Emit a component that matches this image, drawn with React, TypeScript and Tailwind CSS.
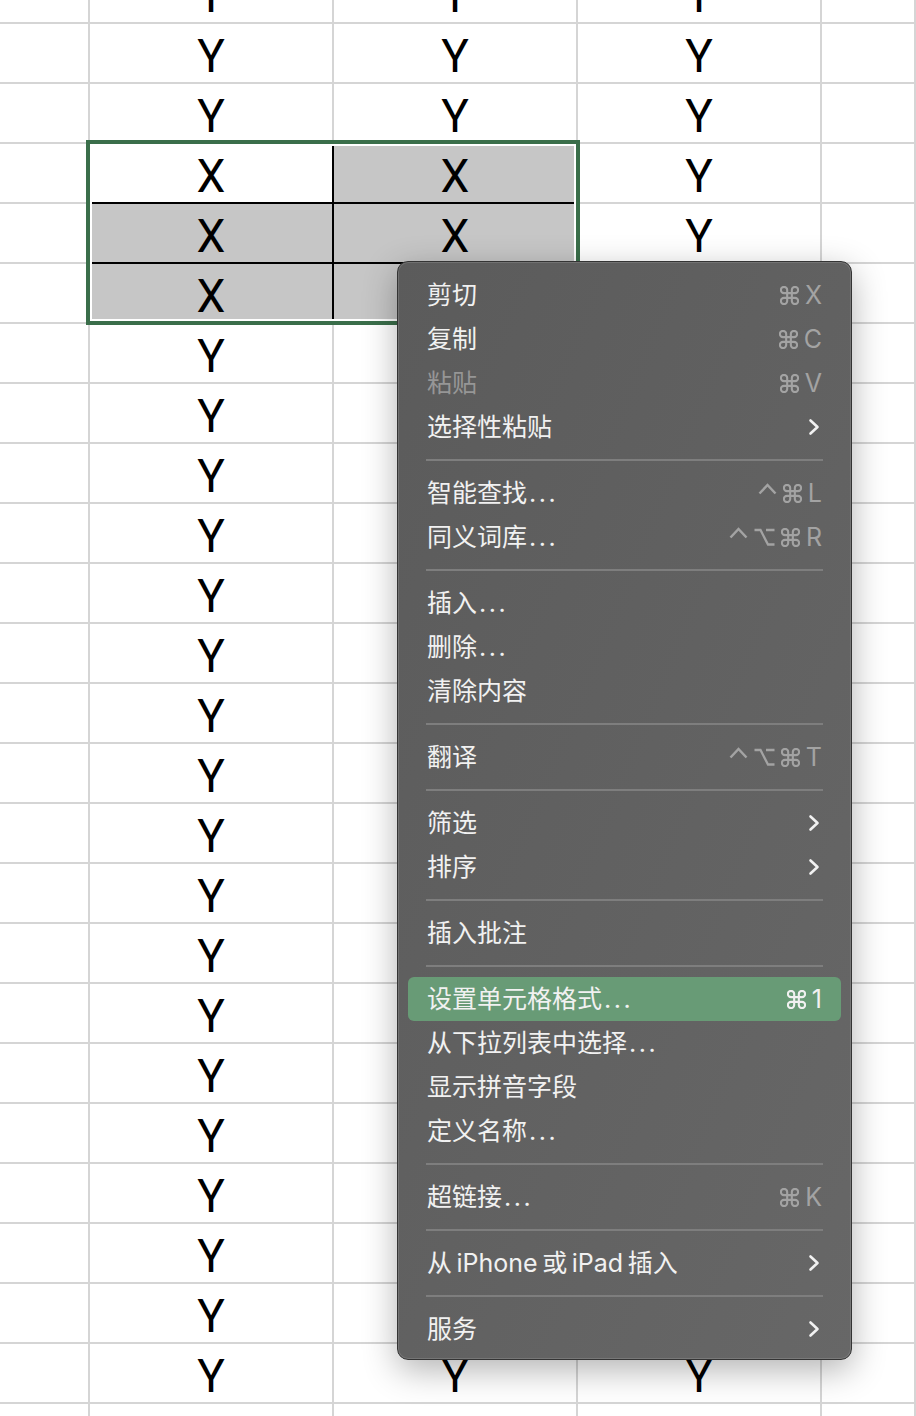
import React from "react";

type MenuItem = {
  label: string;
  keys?: string[];
  sub?: boolean;
  disabled?: boolean;
  active?: boolean;
};

const GROUPS: MenuItem[][] = [
  [
    { label: "剪切", keys: ["cmd", "X"] },
    { label: "复制", keys: ["cmd", "C"] },
    { label: "粘贴", keys: ["cmd", "V"], disabled: true },
    { label: "选择性粘贴", sub: true },
  ],
  [
    { label: "智能查找...", keys: ["ctrl", "cmd", "L"] },
    { label: "同义词库...", keys: ["ctrl", "opt", "cmd", "R"] },
  ],
  [{ label: "插入..." }, { label: "删除..." }, { label: "清除内容" }],
  [{ label: "翻译", keys: ["ctrl", "opt", "cmd", "T"] }],
  [
    { label: "筛选", sub: true },
    { label: "排序", sub: true },
  ],
  [{ label: "插入批注" }],
  [
    { label: "设置单元格格式...", keys: ["cmd", "1"], active: true },
    { label: "从下拉列表中选择..." },
    { label: "显示拼音字段" },
    { label: "定义名称..." },
  ],
  [{ label: "超链接...", keys: ["cmd", "K"] }],
  [{ label: "从\u2009iPhone\u2009或\u2009iPad\u2009插入", sub: true }],
  [{ label: "服务", sub: true }],
];

const ROW_COUNT = 25;
const SEL_ROWS = [3, 4, 5];

function Key({ k }: { k: string }) {
  if (k === "ctrl") {
    return (
      <svg width="19" height="18" viewBox="0 0 19 18" className="self-start mt-[1px]">
        <path d="M1.5 11.5 L9.5 3 L17.5 11.5" fill="none" stroke="currentColor" strokeWidth="2.5" />
      </svg>
    );
  }
  if (k === "opt") {
    return (
      <svg width="21" height="18" viewBox="0 0 21 18">
        <path d="M0.5 2 H6.5 L14 16.5 H20.5 M12 2 H20.5" fill="none" stroke="currentColor" strokeWidth="2.3" />
      </svg>
    );
  }
  if (k === "cmd") {
    // place-of-interest sign
    return (
      <svg width="19" height="19" viewBox="0 0 18 18" fill="none" stroke="currentColor" strokeWidth="2">
        <path d="M6.8 3.8 V14.2 M11.2 3.8 V14.2 M3.8 6.8 H14.2 M3.8 11.2 H14.2" />
        <path d="M6.8 3.8 A3 3 0 1 0 3.8 6.8" />
        <path d="M11.2 3.8 A3 3 0 1 1 14.2 6.8" />
        <path d="M6.8 14.2 A3 3 0 1 1 3.8 11.2" />
        <path d="M11.2 14.2 A3 3 0 1 0 14.2 11.2" />
      </svg>
    );
  }
  return <span className="text-[25px] leading-none">{k}</span>;
}

function Chevron() {
  return (
    <svg width="12" height="18" viewBox="0 0 12 18" className="mr-[2px]">
      <path d="M2.5 2.5 L9.5 9 L2.5 15.5" fill="none" stroke="currentColor" strokeWidth="2.6" strokeLinecap="round" strokeLinejoin="round" />
    </svg>
  );
}

function Label({ text }: { text: string }) {
  if (!text.endsWith("...")) return <>{text}</>;
  return (
    <>
      {text.slice(0, -3)}
      <span className="ml-[2px] tracking-[2.5px]">...</span>
    </>
  );
}

function ContextMenu() {
  return (
    <div className="absolute left-[397px] top-[261px] w-[455px] rounded-[11px] border border-[#343434] bg-linear-to-br from-[#5b5b5b] to-[#676767] pt-[11px] pb-[8px] shadow-[inset_0_0_0_1px_rgba(255,255,255,0.13),0_10px_34px_rgba(0,0,0,0.3)] font-['Inter','Noto_Sans_CJK_SC',sans-serif]">
      {GROUPS.map((group, gi) => (
        <div key={gi}>
          {gi > 0 && (
            <div className="flex h-[22px] items-center px-[28px]">
              <div className="h-[2px] w-full bg-[#7e7e7e]" />
            </div>
          )}
          {group.map((item) => (
            <div
              key={item.label}
              className={`mx-[10px] flex h-[44px] items-center justify-between rounded-[6px] px-[19px] ${
                item.active ? "bg-[#689b76]" : ""
              }`}
            >
              <span
                className={`text-[25px] leading-none ${
                  item.disabled ? "text-[#969696]" : "text-[#f1f1f1]"
                }`}
              >
                <Label text={item.label} />
              </span>
              {item.keys && (
                <span
                  className={`flex items-center gap-[6px] ${
                    item.active ? "text-[#f1f1f1]" : "text-[#a3a3a3]"
                  }`}
                >
                  {item.keys.map((k, i) => (
                    <Key key={i} k={k} />
                  ))}
                </span>
              )}
              {item.sub && (
                <span className="text-[#f1f1f1]">
                  <Chevron />
                </span>
              )}
            </div>
          ))}
        </div>
      ))}
    </div>
  );
}

function Cell({
  width,
  text,
  selected,
  active,
}: {
  width: string;
  text?: string;
  selected?: boolean;
  active?: boolean;
}) {
  const border = selected ? "border-black" : "border-[#d5d5d5]";
  const bg = selected && !active ? "bg-[#c6c6c6]" : "bg-white";
  return (
    <div
      className={`${width} flex h-full shrink-0 items-center justify-center border-r-2 border-b-2 ${border} ${bg} pt-[6px] text-[46px] leading-none text-black`}
    >
      {text}
    </div>
  );
}

export default function App() {
  const rows = Array.from({ length: ROW_COUNT }, (_, i) => i);
  return (
    <div className="relative h-[1416px] w-[916px] overflow-hidden bg-white font-['Roboto',sans-serif]">
      <div className="-mt-[36px]">
        {rows.map((r) => {
          const sel = SEL_ROWS.includes(r);
          return (
            <div key={r} className="flex h-[60px]">
              <Cell width="w-[90px]" />
              <Cell width="w-[244px]" text={sel ? "X" : "Y"} selected={sel} active={r === 3} />
              <Cell width="w-[244px]" text={sel ? "X" : "Y"} selected={sel} />
              <Cell width="w-[244px]" text="Y" />
              <Cell width="flex-1" />
            </div>
          );
        })}
      </div>

      {/* selection outline */}
      <div className="absolute left-[86px] top-[140px] h-[185px] w-[494px] border-4 border-[#3a6e4a] shadow-[inset_0_0_0_2px_#ffffff]" />

      <ContextMenu />
    </div>
  );
}
